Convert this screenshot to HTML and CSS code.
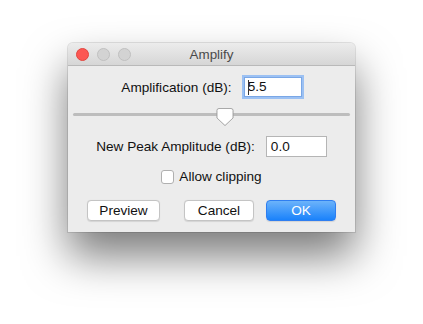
FILE: index.html
```html
<!DOCTYPE html>
<html lang="en">
<head>
  <meta charset="UTF-8" />
  <title>Amplify</title>
  <link rel="stylesheet" href="styles.css">
</head>
<body>

  <!-- Dialog window -->
  <div class="window">
    <div class="titlebar">
      <div class="lights">
        <span class="light close"></span>
        <span class="light"></span>
        <span class="light"></span>
      </div>
      <div class="title">Amplify</div>
    </div>

    <div class="content">
      <div class="row amp-row">
        <label>Amplification (dB):</label>
        <div class="field focused"><span class="caret"></span>5.5</div>
      </div>

      <div class="slider">
        <div class="track"></div>
        <svg class="thumb" width="18" height="20" viewBox="0 0 18 20">
          <path d="M3 1.5 h12 a2 2 0 0 1 2 2 v7.5 l-8 7.5 l-8 -7.5 v-7.5 a2 2 0 0 1 2 -2 z"
                fill="#ffffff" stroke="#a9a9a9" stroke-width="1" />
        </svg>
      </div>

      <div class="row peak-row">
        <label>New Peak Amplitude (dB):</label>
        <div class="field">0.0</div>
      </div>

      <div class="row check-row">
        <span class="checkbox"></span>
        <label>Allow clipping</label>
      </div>

      <div class="buttons">
        <button class="btn preview">Preview</button>
        <button class="btn cancel">Cancel</button>
        <button class="btn ok">OK</button>
      </div>
    </div>
  </div>

</body>
</html>
```

FILE: styles.css
```css
body {
  margin: 0;
  padding: 43px 0 0 68px;
  min-height: 100vh;
  box-sizing: border-box;
  background-color: #ffffff;
  font-family: 'Liberation Sans', Arial, sans-serif;
  font-size: 13.6px;
  color: #111;
}

.window {
  width: 287px;
  background-color: #ececec;
  border-radius: 5px 5px 0 0;
  box-shadow: 0 0 0 1px rgba(0, 0, 0, 0.1), 0 24px 44px rgba(0, 0, 0, 0.52);
}

.titlebar {
  position: relative;
  height: 22px;
  border-radius: 5px 5px 0 0;
  background: linear-gradient(#ececec, #d6d6d6);
  border-bottom: 1px solid #b9b9b9;
}

.lights {
  position: absolute;
  left: 8px;
  top: 5px;
  display: flex;
  gap: 8px;
}

.light {
  width: 11px;
  height: 11px;
  border-radius: 50%;
  background-color: #d3d3d3;
  border: 0.5px solid #c0c0c0;
}

.light.close {
  background-color: #fc5753;
  border-color: #e2463f;
}

.title {
  text-align: center;
  line-height: 23px;
  font-size: 13.4px;
  color: #4a4a4a;
}

.content {
  display: flex;
  flex-direction: column;
  align-items: center;
  padding: 11px 0 11px;
}

.row {
  display: flex;
  align-items: center;
}

.field {
  box-sizing: border-box;
  height: 21px;
  width: 61px;
  margin-left: 11px;
  padding: 2px 4px;
  background: white;
  border: 1px solid #b5b5b5;
  line-height: 16px;
  position: relative;
}

.field.focused {
  width: 58px;
  height: 20px;
  padding: 1px 3px;
  border: 1px solid #7aa7e6;
  box-shadow: 0 0 0 2px #9cc1f3;
  margin-left: 12px;
}

.caret {
  position: absolute;
  left: 3px;
  top: 2px;
  width: 1px;
  height: 15px;
  background: #333;
}

.slider {
  position: relative;
  width: 277px;
  height: 20px;
  margin-top: 10px;
}

.track {
  position: absolute;
  left: 0;
  right: 0;
  top: 6px;
  height: 3px;
  border-radius: 2px;
  background-color: #bdbdbd;
}

.thumb {
  position: absolute;
  left: 143px;
  top: 0;
  filter: drop-shadow(0 0.5px 0.5px rgba(0, 0, 0, 0.15));
}

.peak-row {
  margin-top: 9px;
}

.check-row {
  margin-top: 12px;
}

.checkbox {
  box-sizing: border-box;
  width: 13px;
  height: 14px;
  border: 1px solid #b0b0b0;
  border-radius: 3px;
  background: white;
  margin-right: 5px;
}

.buttons {
  display: flex;
  margin-top: 16px;
}

.btn {
  box-sizing: border-box;
  height: 21px;
  width: 70px;
  padding: 0;
  font-family: 'Liberation Sans', Arial, sans-serif;
  font-size: 13.6px;
  color: #111;
  background: white;
  border: 1px solid #c4c4c4;
  border-radius: 4px;
  box-shadow: 0 0.5px 1px rgba(0, 0, 0, 0.1);
}

.preview {
  width: 73px;
  margin-right: 24px;
}

.cancel {
  margin-right: 12px;
}

.ok {
  color: white;
  border-color: #2f7ef0;
  background: linear-gradient(#6cb3fa, #1a82fb);
}
```
